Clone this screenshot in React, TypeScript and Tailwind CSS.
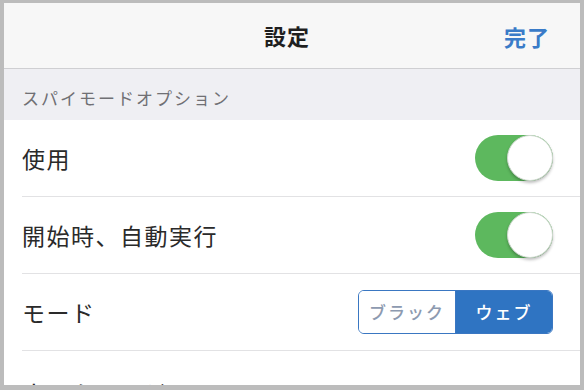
import React from "react";

const font = { fontFamily: '"Noto Sans CJK JP", "Noto Sans", sans-serif' };

function Toggle() {
  return (
    <div className="relative w-[78px] h-[46px] rounded-full bg-[#5db85e]">
      <div className="absolute right-0 top-0 w-[46px] h-[46px] rounded-full bg-white border border-[#cfd8cf] shadow-[0_2px_3px_rgba(0,0,0,0.25)]" />
    </div>
  );
}

function Row({ label, children, last }: { label: string; children?: React.ReactNode; last?: boolean }) {
  return (
    <div className="pl-[18px] bg-white">
      <div className={"flex justify-between h-[77px] pr-[27px] " + (last ? "items-start pt-[24px]" : "items-center border-b border-[#e2e2e4]")}>
        <span className="text-[23px] text-[#2a2a2a] tracking-[1.5px]">{label}</span>
        {children}
      </div>
    </div>
  );
}

export default function App() {
  return (
    <div className="w-[584px] h-[390px] bg-[#bcbcbc] pt-[3px] pl-[4px] pr-[4px] pb-[5px]" style={font}>
      <div className="w-full h-full overflow-hidden bg-white flex flex-col">
        <div className="relative h-[66px] shrink-0 bg-[#f7f7f7] border-b border-[#cfcfd2] flex items-center justify-center">
          <span className="text-[22px] font-bold text-[#1f1f1f] tracking-[1px] mr-[10px]">設定</span>
          <span className="absolute right-[30px] top-1/2 -translate-y-1/2 text-[22px] font-bold text-[#3a7bc8] tracking-[1px]">完了</span>
        </div>
        <div className="h-[51px] shrink-0 bg-[#efeff3] flex items-end pl-[18px] pb-[10px]">
          <span className="text-[17px] text-[#707074] tracking-[2px]">スパイモードオプション</span>
        </div>
        <Row label="使用">
          <Toggle />
        </Row>
        <Row label="開始時、自動実行">
          <Toggle />
        </Row>
        <Row label="モード">
          <div className="flex w-[195px] h-[44px] rounded-[6px] border-[1.5px] border-[#3a77c2] overflow-hidden">
            <div className="flex-1 flex items-center justify-center bg-white border-r border-[#3a77c2]">
              <span className="text-[17px] text-[#8d9ab0] tracking-[2px] font-medium">ブラック</span>
            </div>
            <div className="flex-1 flex items-center justify-center bg-[#2f74c2]">
              <span className="text-[17px] text-white tracking-[2px] font-medium">ウェブ</span>
            </div>
          </div>
        </Row>
        <Row label="ホームページ" last />
      </div>
    </div>
  );
}
